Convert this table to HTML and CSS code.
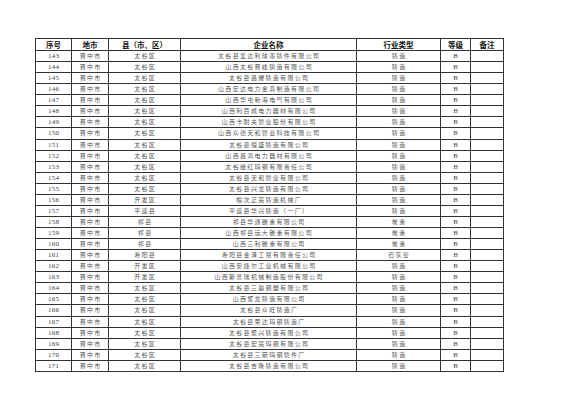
FILE: index.html
```html
<!DOCTYPE html>
<html lang="zh">
<head>
<meta charset="utf-8">
<title>企业名单</title>
<link rel="stylesheet" href="styles.css">
</head>
<body>
<table class="list">
<colgroup>
<col class="c-no"><col class="c-city"><col class="c-county"><col class="c-name"><col class="c-type"><col class="c-grade"><col class="c-note">
</colgroup>
<thead>
<tr><th>序号</th><th>地市</th><th>县（市、区）</th><th>企业名称</th><th>行业类型</th><th>等级</th><th>备注</th></tr>
</thead>
<tbody>
<tr><td class="num">143</td><td>晋中市</td><td>太谷区</td><td>太谷县爱达利球墨铸件有限公司</td><td>铸造</td><td class="num">B</td><td></td></tr>
<tr><td class="num">144</td><td>晋中市</td><td>太谷区</td><td>山西太谷晋峰铸造有限公司</td><td>铸造</td><td class="num">B</td><td></td></tr>
<tr><td class="num">145</td><td>晋中市</td><td>太谷区</td><td>太谷县昌耀铸造有限公司</td><td>铸造</td><td class="num">B</td><td></td></tr>
<tr><td class="num">146</td><td>晋中市</td><td>太谷区</td><td>山西宏达电力金具制造有限公司</td><td>铸造</td><td class="num">B</td><td></td></tr>
<tr><td class="num">147</td><td>晋中市</td><td>太谷区</td><td>山西华屯新海电气有限公司</td><td>铸造</td><td class="num">B</td><td></td></tr>
<tr><td class="num">148</td><td>晋中市</td><td>太谷区</td><td>山西利百成电力器材有限公司</td><td>铸造</td><td class="num">B</td><td></td></tr>
<tr><td class="num">149</td><td>晋中市</td><td>太谷区</td><td>山西卡耐夫管业股份有限公司</td><td>铸造</td><td class="num">B</td><td></td></tr>
<tr><td class="num">150</td><td>晋中市</td><td>太谷区</td><td>山西众德天和管业科技有限公司</td><td>铸造</td><td class="num">B</td><td></td></tr>
<tr><td class="num">151</td><td>晋中市</td><td>太谷区</td><td>太谷县恒盛铸造有限公司</td><td>铸造</td><td class="num">B</td><td></td></tr>
<tr><td class="num">152</td><td>晋中市</td><td>太谷区</td><td>山西昌鸿电力器材有限公司</td><td>铸造</td><td class="num">B</td><td></td></tr>
<tr><td class="num">153</td><td>晋中市</td><td>太谷区</td><td>太谷继红玛钢有限责任公司</td><td>铸造</td><td class="num">B</td><td></td></tr>
<tr><td class="num">154</td><td>晋中市</td><td>太谷区</td><td>太谷县天和管业有限公司</td><td>铸造</td><td class="num">B</td><td></td></tr>
<tr><td class="num">155</td><td>晋中市</td><td>太谷区</td><td>太谷县兴龙铸造有限公司</td><td>铸造</td><td class="num">B</td><td></td></tr>
<tr><td class="num">156</td><td>晋中市</td><td>开发区</td><td>榆次正亮铸造机械厂</td><td>铸造</td><td class="num">B</td><td></td></tr>
<tr><td class="num">157</td><td>晋中市</td><td>平遥县</td><td>平遥县华兴铸造（一厂）</td><td>铸造</td><td class="num">B</td><td></td></tr>
<tr><td class="num">158</td><td>晋中市</td><td>祁县</td><td>祁县华通碳素有限公司</td><td>炭素</td><td class="num">B</td><td></td></tr>
<tr><td class="num">159</td><td>晋中市</td><td>祁县</td><td>山西祁县远大碳素有限公司</td><td>炭素</td><td class="num">B</td><td></td></tr>
<tr><td class="num">160</td><td>晋中市</td><td>祁县</td><td>山西三利碳素有限公司</td><td>炭素</td><td class="num">B</td><td></td></tr>
<tr><td class="num">161</td><td>晋中市</td><td>寿阳县</td><td>寿阳县金泽工贸有限责任公司</td><td>石灰窑</td><td class="num">B</td><td></td></tr>
<tr><td class="num">162</td><td>晋中市</td><td>开发区</td><td>山西安捷尔工业机械有限公司</td><td>铸造</td><td class="num">B</td><td></td></tr>
<tr><td class="num">163</td><td>晋中市</td><td>开发区</td><td>山西斯普瑞机械制造股份有限公司</td><td>铸造</td><td class="num">B</td><td></td></tr>
<tr><td class="num">164</td><td>晋中市</td><td>太谷区</td><td>太谷县三赢钢塑有限公司</td><td>铸造</td><td class="num">B</td><td></td></tr>
<tr><td class="num">165</td><td>晋中市</td><td>太谷区</td><td>山西聚龙铸造有限公司</td><td>铸造</td><td class="num">B</td><td></td></tr>
<tr><td class="num">166</td><td>晋中市</td><td>太谷区</td><td>太谷县众旺铸造厂</td><td>铸造</td><td class="num">B</td><td></td></tr>
<tr><td class="num">167</td><td>晋中市</td><td>太谷区</td><td>太谷县荣达玛钢铸造厂</td><td>铸造</td><td class="num">B</td><td></td></tr>
<tr><td class="num">168</td><td>晋中市</td><td>太谷区</td><td>太谷县聚兴铸造有限公司</td><td>铸造</td><td class="num">B</td><td></td></tr>
<tr><td class="num">169</td><td>晋中市</td><td>太谷区</td><td>太谷县宏亮玛钢有限公司</td><td>铸造</td><td class="num">B</td><td></td></tr>
<tr><td class="num">170</td><td>晋中市</td><td>太谷区</td><td>太谷县三箭玛钢管件厂</td><td>铸造</td><td class="num">B</td><td></td></tr>
<tr><td class="num">171</td><td>晋中市</td><td>太谷区</td><td>太谷县吉隆铸造有限公司</td><td>铸造</td><td class="num">B</td><td></td></tr>
</tbody>
</table>
</body>
</html>
```

FILE: styles.css
```css
html, body {
  margin: 0;
  padding: 0;
  background: #ffffff;
}

body {
  padding: 38px 0 0 35px;
  font-family: "Liberation Serif", "Noto Sans CJK SC", serif;
}

.list {
  border-collapse: collapse;
  table-layout: fixed;
  width: 468px;
}

.c-no { width: 36px; }
.c-city { width: 37px; }
.c-county { width: 72px; }
.c-name { width: 176px; }
.c-type { width: 84px; }
.c-grade { width: 30px; }
.c-note { width: 33px; }

.list th,
.list td {
  border: 1px solid #333333;
  padding: 0;
  text-align: center;
  white-space: nowrap;
  overflow: hidden;
}

.list th {
  height: 11px;
  font-size: 7.5px;
  line-height: 11px;
  font-weight: bold;
  color: #111111;
  font-family: "Noto Sans CJK SC", serif;
}

.list td {
  height: 10.07px;
  font-size: 6px;
  line-height: 10px;
  letter-spacing: 1.3px;
  text-indent: 1.3px;
  color: #555555;
  font-family: "Noto Sans CJK SC", serif;
}

.list td.num {
  font-family: "Liberation Serif", serif;
  font-size: 7px;
  letter-spacing: 0.3px;
  text-indent: 0.3px;
  color: #444444;
}
```
